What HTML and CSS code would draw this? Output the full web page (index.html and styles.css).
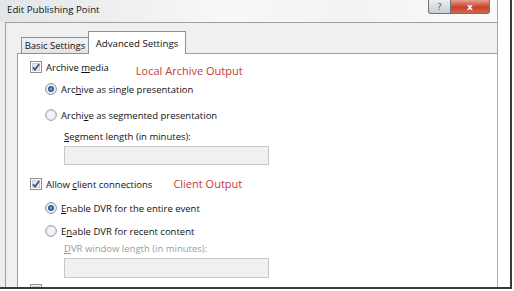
FILE: index.html
```html
<!DOCTYPE html>
<html>
<head>
    <meta charset="UTF-8">
    <title>Edit Publishing Point</title>
    <link rel="stylesheet" href="styles.css">
</head>
<body>
    <div class="window">
        <div class="frame">
            <div class="titlebar">
                <span class="title">Edit Publishing Point</span>
                <div class="caption">
                    <span class="btn-help">?</span>
                    <span class="btn-close">x</span>
                </div>
            </div>
            <div class="client">
                <div class="tabs">
                    <div class="tab tab-basic">Basic Settings</div>
                    <div class="tab tab-active">Advanced Settings</div>
                </div>
                <div class="panel">
                    <div class="row row-archive">
                        <svg class="ctl" viewBox="0 0 12 12"><rect x="0.5" y="0.5" width="11" height="11" fill="#fff" stroke="#8e8f8f"/><rect x="2.5" y="2.5" width="7" height="7" fill="#e4e9f0" stroke="#c9d0d8"/><path d="M3 6.2 L5 8.6 L9.2 3" fill="none" stroke="#3b4e86" stroke-width="1.6"/></svg>
                        <span>Archive <u>m</u>edia</span>
                        <span class="note note-archive">Local Archive Output</span>
                    </div>
                    <div class="row sub row-single">
                        <svg class="ctl" viewBox="0 0 12 12"><circle cx="6" cy="6" r="5.4" fill="#eef0f3" stroke="#8b9096"/><circle cx="6" cy="6" r="3" fill="#2c5a93"/><circle cx="6" cy="6" r="1.4" fill="#6fa3d8"/></svg>
                        <span>Arc<u>h</u>ive as single presentation</span>
                    </div>
                    <div class="row sub row-segmented">
                        <svg class="ctl" viewBox="0 0 12 12"><circle cx="6" cy="6" r="5.4" fill="#e6e8eb" stroke="#9ea2a7"/><circle cx="6" cy="6" r="3.4" fill="#f4f5f6"/></svg>
                        <span>Archi<u>v</u>e as segmented presentation</span>
                    </div>
                    <div class="label label-segment"><u>S</u>egment length (in minutes):</div>
                    <div class="field"></div>

                    <div class="row row-client">
                        <svg class="ctl" viewBox="0 0 12 12"><rect x="0.5" y="0.5" width="11" height="11" fill="#fff" stroke="#8e8f8f"/><rect x="2.5" y="2.5" width="7" height="7" fill="#e4e9f0" stroke="#c9d0d8"/><path d="M3 6.2 L5 8.6 L9.2 3" fill="none" stroke="#3b4e86" stroke-width="1.6"/></svg>
                        <span>Allow <u>c</u>lient connections</span>
                        <span class="note note-client">Client Output</span>
                    </div>
                    <div class="row sub row-entire">
                        <svg class="ctl" viewBox="0 0 12 12"><circle cx="6" cy="6" r="5.4" fill="#eef0f3" stroke="#8b9096"/><circle cx="6" cy="6" r="3" fill="#2c5a93"/><circle cx="6" cy="6" r="1.4" fill="#6fa3d8"/></svg>
                        <span><u>E</u>nable DVR for the entire event</span>
                    </div>
                    <div class="row sub row-recent">
                        <svg class="ctl" viewBox="0 0 12 12"><circle cx="6" cy="6" r="5.4" fill="#e6e8eb" stroke="#9ea2a7"/><circle cx="6" cy="6" r="3.4" fill="#f4f5f6"/></svg>
                        <span>E<u>n</u>able DVR for recent content</span>
                    </div>
                    <div class="label label-dvr disabled"><u>D</u>VR window length (in minutes):</div>
                    <div class="field field-dvr"></div>

                    <div class="row row-more">
                        <svg class="ctl" viewBox="0 0 12 12"><rect x="0.5" y="0.5" width="11" height="11" fill="#f4f4f4" stroke="#8e8f8f"/><rect x="2.5" y="2.5" width="7" height="7" fill="#e4e9f0" stroke="#c9d0d8"/></svg>
                        <span>Allow server connections</span>
                    </div>
                </div>
            </div>
        </div>
    </div>
</body>
</html>
```

FILE: styles.css
```css
body {
    margin: 0;
    width: 514px;
    height: 291px;
    overflow: hidden;
    background: #fff;
    font-family: "Open Sans", sans-serif;
    font-size: 9.5px;
    color: #111;
}

.window {
    width: 510px;
    height: 287px;
    border-right: 2px solid #3a3a3a;
    border-bottom: 2px solid #3a3a3a;
    background: #fff;
    overflow: hidden;
}

.frame {
    width: 497px;
    height: 100%;
    border-right: 1px solid #a9a9a9;
    background: #eceef0;
    display: flex;
    flex-direction: column;
    overflow: hidden;
}

.titlebar {
    height: 22px;
    flex: none;
    display: flex;
    justify-content: space-between;
    align-items: flex-start;
    background: linear-gradient(90deg, #e3e6e9 0%, #eef0f1 25%, #f7f8f8 45%, #f2f3f4 70%, #fafafa 100%);
}

.title {
    padding: 3px 0 0 7px;
    font-size: 9.7px;
    line-height: 14px;
    color: #111;
}

.caption {
    display: flex;
    margin-right: 7px;
}

.btn-help,
.btn-close {
    height: 14px;
    box-sizing: border-box;
    border: 1px solid #6f747a;
    border-top: none;
    display: flex;
    align-items: center;
    justify-content: center;
    font-family: "DejaVu Sans", sans-serif;
    font-size: 9px;
    line-height: 10px;
}

.btn-help {
    width: 22px;
    border-radius: 0 0 0 3px;
    border-right: none;
    background: linear-gradient(#eceef0, #c6cdd4);
    color: #5b6672;
}

.btn-close {
    width: 40px;
    border-radius: 0 0 3px 0;
    background: linear-gradient(#e8a08e, #c8412b 55%, #d2664c);
    color: #fff;
    font-weight: bold;
}

.client {
    flex: 1;
    margin-left: 5px;
    width: 485px;
    border: 1px solid #a0a0a0;
    border-bottom: none;
    background: #f0f0f0;
    padding: 8px 13px 0 11px;
    display: flex;
    flex-direction: column;
}

.tabs {
    display: flex;
    align-items: flex-end;
    height: 23px;
    padding-left: 4px;
    margin-bottom: -1px;
    position: relative;
    z-index: 1;
}

.tab {
    box-sizing: border-box;
    border: 1px solid #8d9096;
    text-align: center;
}

.tab-basic {
    width: 67px;
    height: 17px;
    line-height: 15px;
    background: linear-gradient(#f2f2f2, #e3e3e3);
    border-right: none;
}

.tab-active {
    width: 98px;
    height: 23px;
    border-bottom: none;
    background: #fff;
    line-height: 14px;
    padding-top: 5px;
    font-size: 9.7px;
}

.panel {
    flex: 1;
    background: #fff;
    border: 1px solid #9a9da3;
    padding: 5px 0 0 12px;
}

.row {
    display: flex;
    align-items: center;
    height: 16px;
    white-space: nowrap;
}

.row.sub {
    margin-left: 15px;
}

.ctl {
    width: 12px;
    height: 12px;
    margin-right: 4px;
    flex: none;
}

.note {
    color: #c63a34;
    font-size: 11px;
}

.note-archive {
    margin-left: 27px;
    position: relative;
    top: 3px;
}

.note-client {
    margin-left: 21px;
    position: relative;
    top: -1px;
}

.row-single {
    margin-top: 6px;
}

.row-segmented {
    margin-top: 10px;
}

.label {
    margin: 6px 0 0 34px;
    height: 16px;
    line-height: 16px;
}

.label.disabled {
    color: #9b9b9b;
    margin-top: 2px;
}

.field {
    margin: 1px 0 0 34px;
    width: 205px;
    height: 19px;
    box-sizing: border-box;
    background: #f0f0f0;
    border: 1px solid #c8c8c8;
}

.field-dvr {
    height: 20px;
}

.row-client {
    margin-top: 11px;
}

.row-entire {
    margin-top: 8px;
}

.row-recent {
    margin-top: 7px;
}

.row-more {
    margin-top: 4px;
}
```
